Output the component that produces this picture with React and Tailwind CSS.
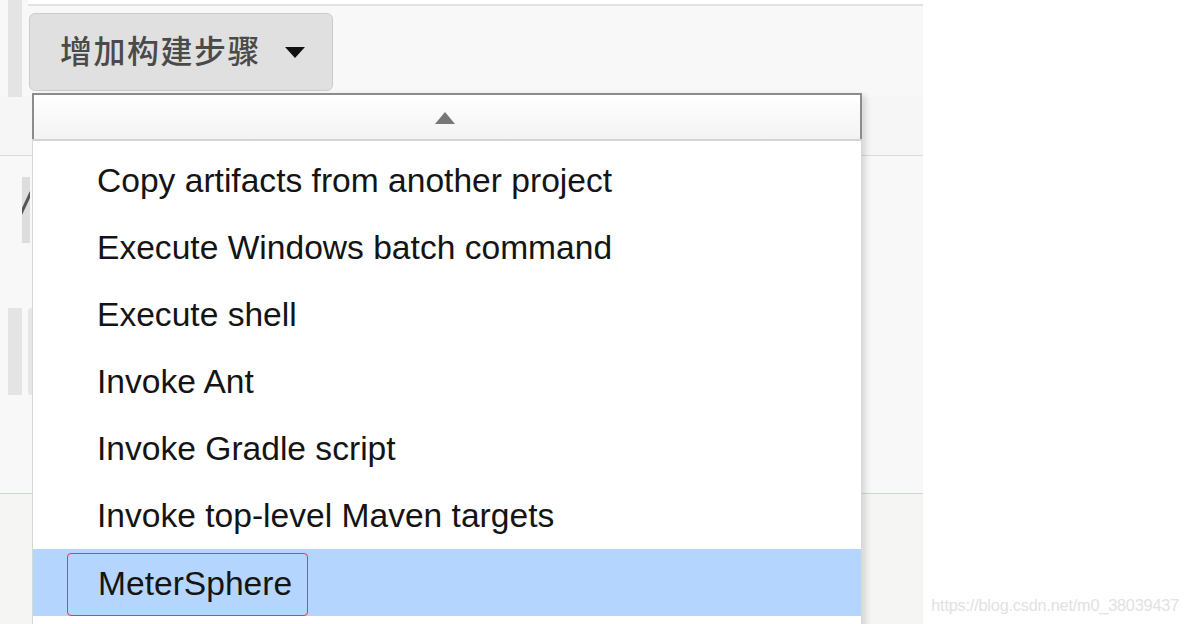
import React from "react";

const items = [
  "Copy artifacts from another project",
  "Execute Windows batch command",
  "Execute shell",
  "Invoke Ant",
  "Invoke Gradle script",
  "Invoke top-level Maven targets",
];

export default function App() {
  const sans = { fontFamily: '"Liberation Sans", Arial, sans-serif' };
  return (
    <div
      className="relative w-[1189px] h-[624px] overflow-hidden bg-white flex"
      style={sans}
    >
      {/* underlying page */}
      <div className="w-[923px] h-full bg-[#f8f8f8] flex flex-col">
        <div className="h-[97px] flex">
          <div className="w-[28px] h-full">
            <div className="ml-[8px] w-[14px] h-full bg-[#e4e4e4]" />
          </div>
          <div className="flex-1 flex flex-col">
            <div className="h-[6px] bg-white border-b-2 border-[#e2e2e2]" />
            <button className="mt-[7px] ml-[1px] w-[304px] h-[78px] rounded-[6px] bg-[#e0e0e0] border border-[#cccccc] flex items-center pl-[30px] pb-[6px] text-[#4a4a4a]">
              <span
                className="text-[32px] tracking-[1.5px] leading-none font-medium"
                style={{
                  fontFamily:
                    '"Noto Sans CJK SC", "Liberation Sans", sans-serif',
                }}
              >
                增加构建步骤
              </span>
              <svg
                width="20"
                height="11"
                viewBox="0 0 20 11"
                className="ml-[24px] mt-[6px]"
              >
                <path d="M0 0 L20 0 L10 11 Z" fill="#111" />
              </svg>
            </button>
          </div>
        </div>
        <div className="h-[59px] border-b border-[#dadada] bg-[#f6f6f6]" />
        <div className="mt-[21px] ml-[22px] w-[8px] h-[66px] bg-[#dddddd] overflow-hidden relative">
          <div className="absolute left-[2px] top-[14px] w-[3px] h-[26px] bg-[#555] rotate-[25deg]" />
        </div>
        <div className="mt-[65px] h-[87px] flex">
          <div className="ml-[8px] w-[14px] h-full bg-[#e4e4e4]" />
          <div className="ml-[6px] w-[4px] h-full bg-[#e6e6e6] rounded-l-[3px]" />
        </div>
        <div className="mt-[98px] flex-1 border-t border-[#c9dccb] bg-[#f5f6f3]" />
      </div>

      {/* right area with watermark */}
      <div className="flex-1 flex flex-col justify-end items-end pr-[10px] pb-[11px]">
        <span className="text-[16.3px] text-[#e2e2e2] leading-none tracking-[-0.2px]">
          https://blog.csdn.net/m0_38039437
        </span>
      </div>

      {/* dropdown menu overlay */}
      <div className="absolute left-[32px] top-[93px] w-[830px] z-10 shadow-[6px_0_6px_-2px_rgba(0,0,0,0.12)]">
        <div className="h-[46px] border-2 border-b-0 border-[#8c8c8c] bg-gradient-to-b from-white to-[#f3f3f3] flex items-center justify-center">
          <svg width="20" height="12" viewBox="0 0 20 12" className="mt-[2px] -ml-[4px]">
            <path d="M10 0 L20 12 L0 12 Z" fill="#777" />
          </svg>
        </div>
        <div className="h-[2px] bg-[#d4d4d4]" />
        <div className="bg-white border-l border-r border-[#d8d8d8] pt-[6px] h-[500px]">
          {items.map((t) => (
            <div
              key={t}
              className="h-[67px] flex items-center pl-[64px] pt-[2px] text-[33.6px] text-[#141414]"
            >
              {t}
            </div>
          ))}
          <div className="h-[67px] bg-[#b4d5fd] flex items-center pl-[34px] pt-[4px]">
            <div className="h-[63px] w-[241px] border border-[#f2363a] rounded-[4px] flex items-center pl-[30px] text-[33.6px] text-[#141414]">
              MeterSphere
            </div>
          </div>
        </div>
      </div>
    </div>
  );
}
